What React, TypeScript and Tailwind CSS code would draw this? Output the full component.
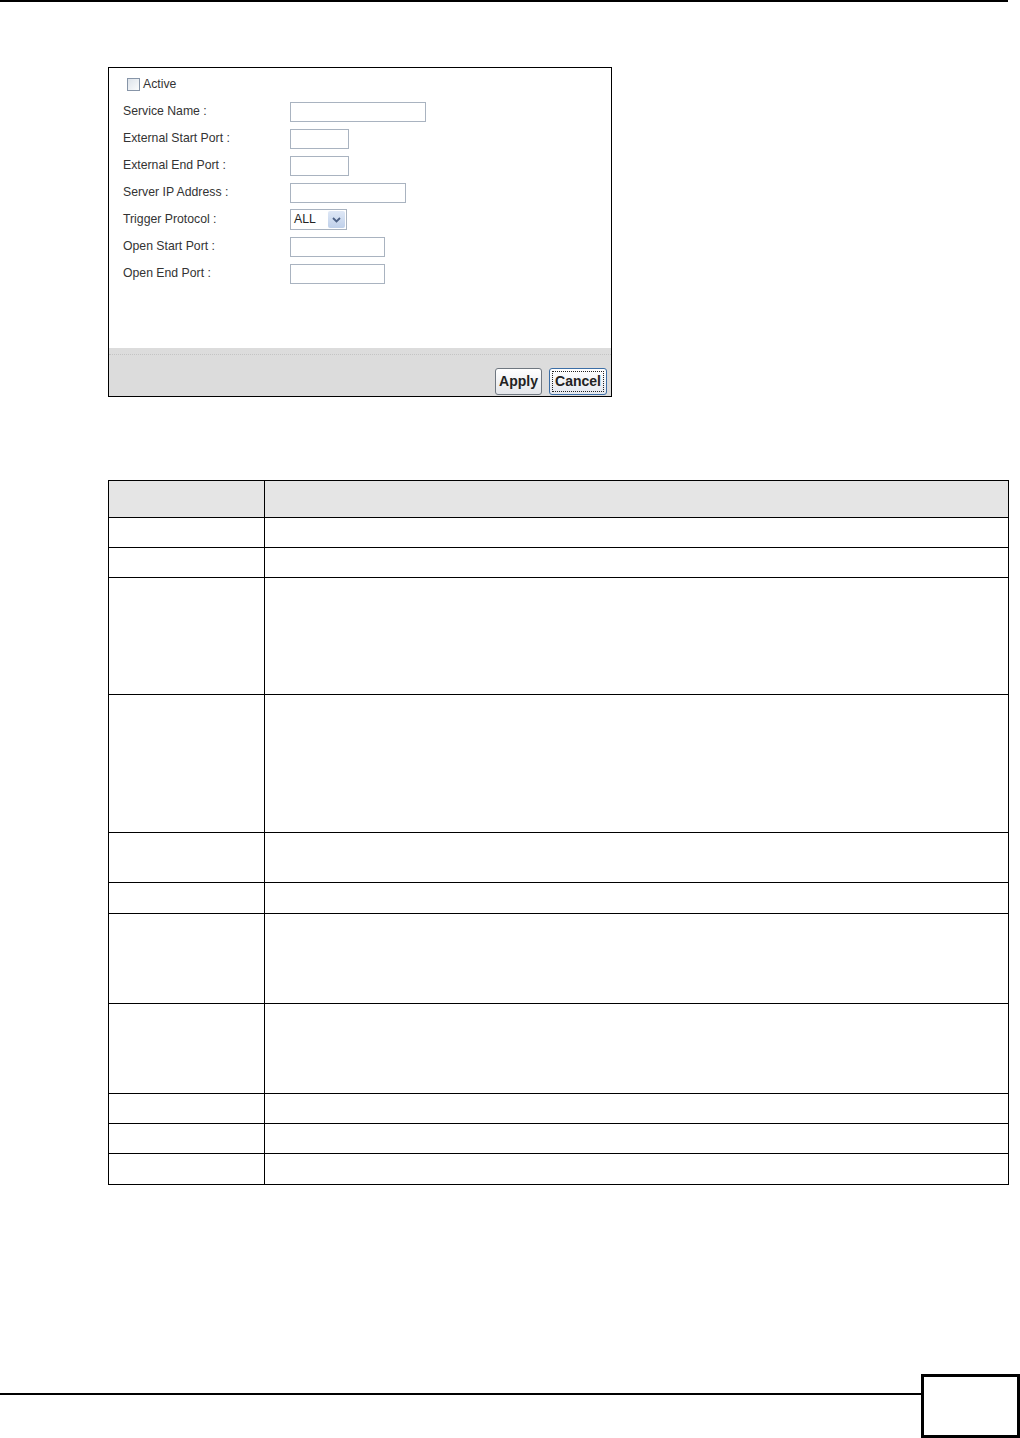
import React from 'react';

const fields = [
  { label: 'Service Name :', w: 'w-[136px]' },
  { label: 'External Start Port :', w: 'w-[59px]' },
  { label: 'External End Port :', w: 'w-[59px]' },
  { label: 'Server IP Address :', w: 'w-[116px]' },
  { label: 'Trigger Protocol :', w: 'select' },
  { label: 'Open Start Port :', w: 'w-[95px]' },
  { label: 'Open End Port :', w: 'w-[95px]' },
];

// row heights taken from the printed table, header first
const rows = ['h-[36px]', 'h-[30px]', 'h-[30px]', 'h-[117px]', 'h-[138px]', 'h-[50px]', 'h-[31px]', 'h-[90px]', 'h-[90px]', 'h-[30px]', 'h-[30px]', 'h-[31px]'];

function TriggerSelect() {
  return (
    <div className="flex items-center w-[57px] h-[21px] border border-[#a9b3c0] bg-white">
      <span className="flex-1 pl-[3px] text-[12.25px] text-[#222] leading-none">ALL</span>
      <span className="flex items-center justify-center w-[17px] h-[17px] mr-[1px] bg-gradient-to-b from-[#dfe8f6] to-[#bfd0ea] rounded-[2px]">
        <svg width="9" height="6" viewBox="0 0 9 6">
          <path d="M1 1 L4.5 4.5 L8 1" stroke="#4d6185" strokeWidth="1.8" fill="none" />
        </svg>
      </span>
    </div>
  );
}

function RuleScreen() {
  return (
    <div className="ml-[108px] mt-[65px] w-[504px] h-[331px] border border-black bg-white flex flex-col font-['Liberation_Sans',Arial,sans-serif] text-[12.25px] text-[#333]">
      <div className="flex-1 pt-[3px]">
        <div className="h-[27px] flex items-center pl-[18px]">
          <span className="w-[13px] h-[13px] border border-[#8795a8] bg-gradient-to-br from-[#dde3ea] to-[#fbfcfd]" />
          <span className="ml-[3px]">Active</span>
        </div>
        {fields.map((f) => (
          <div key={f.label} className="h-[27px] flex items-center pl-[14px]">
            <span className="w-[167px]">{f.label}</span>
            {f.w === 'select' ? (
              <TriggerSelect />
            ) : (
              <span className={`${f.w} h-[20px] border border-[#a9b3c0] bg-white`} />
            )}
          </div>
        ))}
      </div>
      <div className="h-[48px] bg-[#dcdcdc] flex flex-col">
        <div className="mt-[6px] border-t border-dotted border-[#c4c4c4]" />
        <div className="flex-1 flex items-end justify-end gap-[7px] pr-[4px] pb-[1px]">
          <button className="w-[47px] h-[27px] rounded-[3px] border border-[#6f7780] bg-gradient-to-b from-white to-[#e4e6ea] text-[14px] font-bold text-[#222]">
            Apply
          </button>
          <button className="w-[58px] h-[27px] rounded-[3px] border border-[#3c6ea6] bg-gradient-to-b from-white to-[#e4e8ef] p-[2px]">
            <span className="flex items-center justify-center w-full h-full border border-dotted border-[#222] text-[14px] font-bold text-[#222]">
              Cancel
            </span>
          </button>
        </div>
      </div>
    </div>
  );
}

function FieldTable() {
  return (
    <div className="ml-[108px] mt-[83px] w-[901px] border border-black">
      {rows.map((h, i) => (
        <div key={i} className={`${h} flex ${i > 0 ? 'border-t border-black' : ''} ${i === 0 ? 'bg-[#e5e5e5]' : 'bg-white'}`}>
          <div className="w-[156px] border-r border-black" />
          <div className="flex-1" />
        </div>
      ))}
    </div>
  );
}

export default function App() {
  return (
    <div className="w-[1020px] h-[1438px] bg-white flex flex-col overflow-hidden">
      <div className="w-[1008px] h-[2px] bg-black" />
      <RuleScreen />
      <FieldTable />
      <div className="mt-[189px] flex items-start">
        <div className="flex-1 mt-[19px] h-[2px] bg-black" />
        <div className="w-[99px] h-[64px] border-[3px] border-black bg-white" />
      </div>
    </div>
  );
}
